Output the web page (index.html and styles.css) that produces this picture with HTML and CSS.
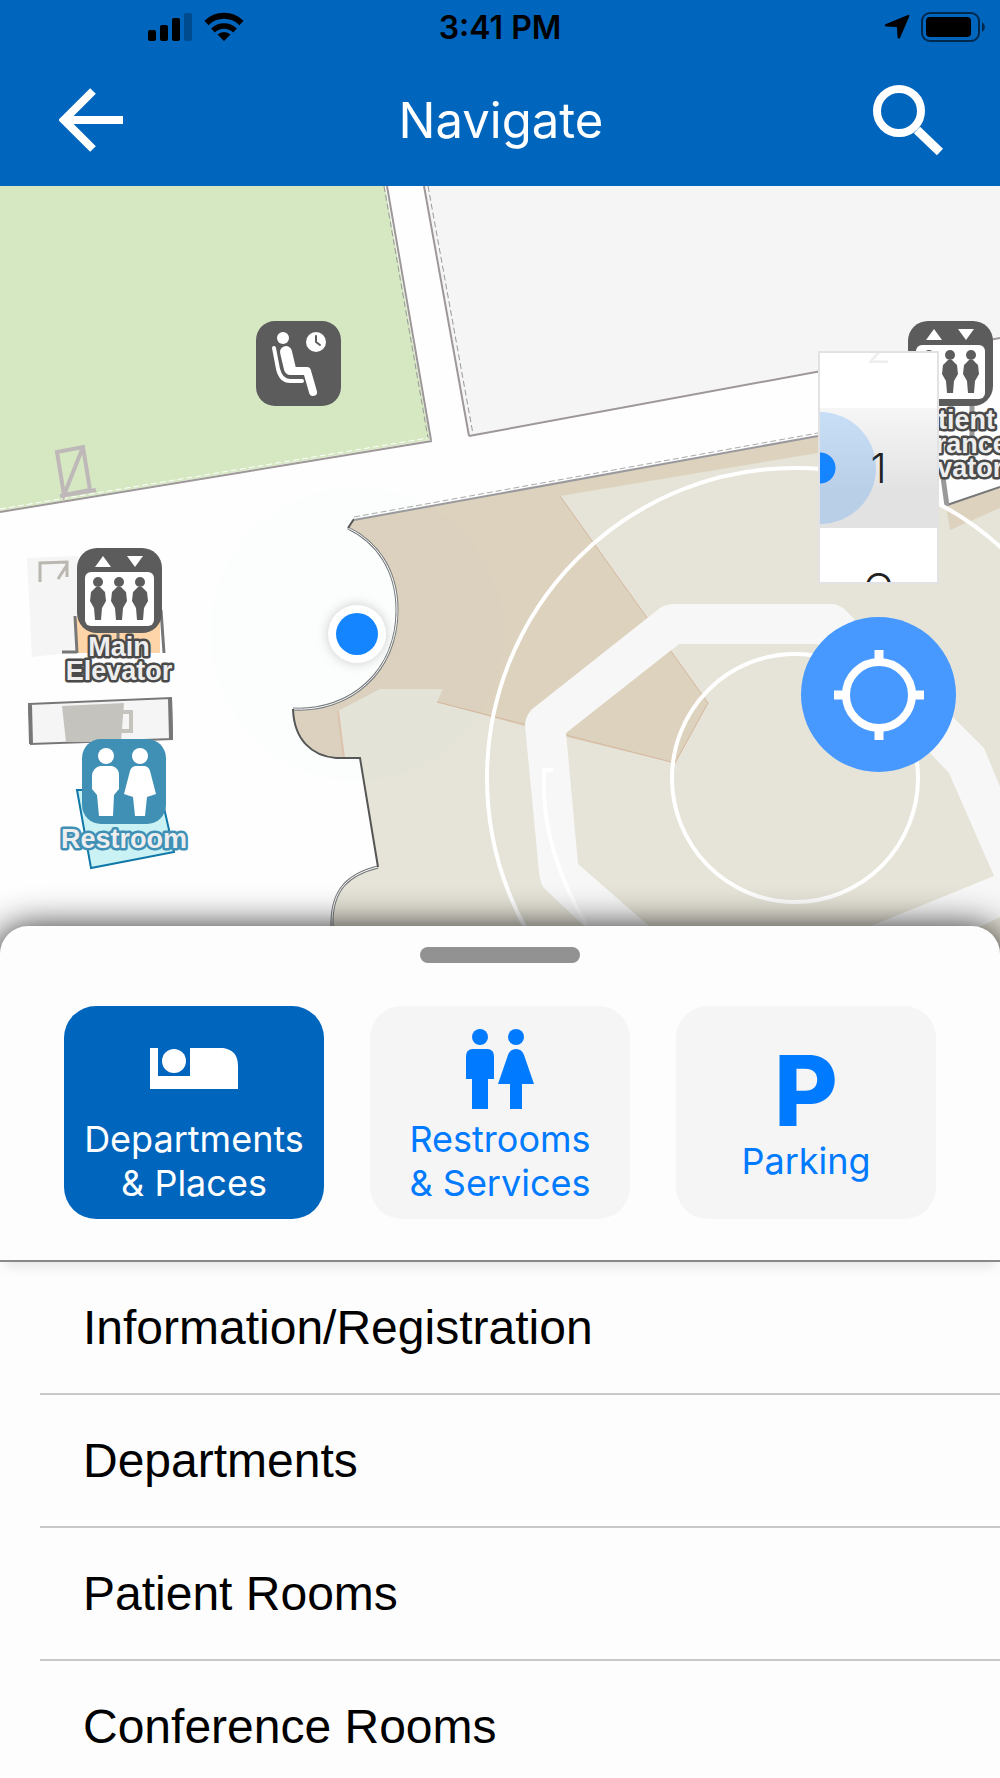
FILE: index.html
```
<!DOCTYPE html>
<html lang="en">
<head>
    <meta charset="UTF-8">
    <meta name="viewport" content="width=device-width, initial-scale=1.0">
    <title>Navigate</title>
    <link rel="stylesheet" href="styles.css">
</head>
<body>

    <header>
        <div class="status-bar">
            <div class="status-left">
                <svg width="44" height="28" viewBox="0 0 44 28">
                    <rect x="0" y="17" width="8" height="11" rx="2"/>
                    <rect x="12" y="12" width="8" height="16" rx="2"/>
                    <rect x="24" y="5" width="8" height="23" rx="2"/>
                    <rect x="36" y="0" width="8" height="28" rx="2" opacity="0.25"/>
                </svg>
                <svg width="40" height="30" viewBox="0 0 40 30">
                    <path d="M2.500 11 A25 25 0 0 1 37.500 11" fill="none" stroke="#000" stroke-width="6"/>
                    <path d="M9 18.500 A16 16 0 0 1 31 18.500" fill="none" stroke="#000" stroke-width="5.500"/>
                    <path d="M20 29 L13.500 22.500 A9.500 9.500 0 0 1 26.500 22.500 Z"/>
                </svg>
            </div>
            <span class="time">3:41 PM</span>
            <div class="status-right">
                <svg width="26" height="26" viewBox="0 0 26 26">
                    <path d="M24 1 Q26 0 25 3 L16 24 Q14 26 13.500 23 L13 14 Q13 13 12 13 L3 12.500 Q-1 12 2 10 Z"/>
                </svg>
                <svg width="64" height="30" viewBox="0 0 64 30">
                    <rect x="1" y="1" width="57" height="28" rx="8" fill="none" stroke="#000" stroke-opacity="0.6" stroke-width="2"/>
                    <rect x="5" y="5" width="45" height="20" rx="4"/>
                    <path d="M61 10 Q64 12 64 15 Q64 18 61 20 Z" opacity="0.6"/>
                </svg>
            </div>
        </div>
        <nav>
            <button type="button" class="nav-button" aria-label="Back">
                <svg width="64" height="64" viewBox="0 0 64 64" fill="none" stroke="#fff" stroke-width="8">
                    <path d="M64 32 H8 M34 3 L5 32 L34 61"/>
                </svg>
            </button>
            <h1>Navigate</h1>
            <button type="button" class="nav-button" aria-label="Search">
                <svg width="70" height="71" viewBox="0 0 70 71" fill="none" stroke="#fff">
                    <circle cx="26" cy="26" r="22" stroke-width="8"/>
                    <path d="M44 45 L67 67" stroke-width="9"/>
                </svg>
            </button>
        </nav>
    </header>

    <main>
        <section class="map">
            <svg class="map-canvas" viewBox="0 186 1000 780">
                <defs>
                    <symbol id="elevator" viewBox="0 0 85 85">
                        <rect width="85" height="85" rx="20" fill="#5c5c5c"/>
                        <rect x="8" y="24" width="69" height="54" rx="6" fill="#fff"/>
                        <path d="M18 19 L26 8 L34 19 Z M50 8 H66 L58 19 Z" fill="#fff"/>
                        <g id="rider" fill="#5c5c5c">
                            <circle cx="21" cy="34" r="5"/>
                            <path d="M19 39 H23 L28 44 L29 53 L25 60 L24 72 H18 L17 60 L13 53 L14 44 Z"/>
                        </g>
                        <use href="#rider" x="21"/>
                        <use href="#rider" x="42"/>
                    </symbol>
                </defs>

                <!-- streets and lots -->
                <rect y="186" width="1000" height="780" fill="#fefefe"/>
                <path d="M0 186 H385 L430 440 L0 511 Z" fill="#d6e8c2"/>
                <path d="M425 186 H1000 V338 L470 436 Z" fill="#f5f5f5"/>
                <g fill="none" stroke="#9d9798" stroke-width="2">
                    <path d="M0 512 L432 441 M469 436 L1000 338"/>
                    <path d="M387 186 L431 440 M424 186 L469 436"/>
                    <path d="M384 186 L428 438 M428 186 L473 434" stroke="#999" stroke-width="1" stroke-dasharray="6 3"/>
                    <path d="M0 509 L428 438" stroke="#fff" stroke-width="1" stroke-dasharray="6 3"/>
                </g>
                <path d="M57 452 L83 447 L90 490 L64 495 Z L64 495 L83 447 M60 496 L96 490" fill="none" stroke="#bfb8b8" stroke-width="4"/>

                <!-- building -->
                <path d="M352 520 L842 432 L900 500 L947 506 L1000 488 V966 H332 V926 C331 888 350 874 378 867 L360 758 H336 C312 756 294 740 293 709 C350 712 397 672 397 610 C397 570 377 542 348 528 Z" fill="#e6e4d8"/>
                <path d="M352 520 L818 436 V453 L560 496 L647 618 L708 703 L675 763 L566 737 L524 726 L437 702 L443 689 H380 L338 711 L344 758 H336 C312 756 294 740 293 709 C350 712 397 672 397 610 C397 570 377 542 348 528 Z" fill="#ddd2be"/>
                <path d="M560 496 L708 703 L675 763 L437 702" fill="none" stroke="#d5b69c" stroke-width="1"/>
                <path d="M338 711 L344 758" stroke="#dec3ae" stroke-width="2"/>
                <path d="M946 506 L1000 488 V508 L950 530 Z" fill="#ddd2be"/>
                <g fill="none" stroke="#fff">
                    <path d="M332 926 C331 888 350 874 378 867 M293 709 C350 712 397 672 397 610 C397 570 377 542 348 528" stroke="#777a7c" stroke-width="3"/>
                    <path d="M332 926 C331 888 350 874 378 867 M293 709 C350 712 397 672 397 610 C397 570 377 542 348 528" stroke-width="1"/>
                    <path d="M378 867 L360 758 H336 C312 756 294 740 293 709 M348 528 L354 519" stroke="#555" stroke-width="2"/>
                    <path d="M354 520 L818 436" stroke="#9a9a9e" stroke-width="2"/>
                    <path d="M354 517 L818 433" stroke="#aaa" stroke-width="1" stroke-dasharray="6 3"/>
                    <path d="M947 505 L1000 487" stroke="#777" stroke-width="2"/>
                    <path d="M942 470 L947 506" stroke="#999" stroke-width="5"/>
                    <path d="M972 400 V440" stroke="#999" stroke-width="5"/>
                </g>

                <!-- courtyard -->
                <path fill-rule="evenodd" fill="#f7f7f7" d="M674 604 H834 Q842 605 852 617 L984 748 L1000 787 V917 L900 966 H620 L584 926 L544 888 Q540 883 539 872 L525 725 Q525 718 531 710 L660 608 Q666 604 674 604 Z M679 644 L566 733 L578 864 L649 926 L690 966 H780 L871 926 L994 876 L949 773 L930 753 L817 644 Z"/>
                <g fill="none" stroke="#fff" stroke-width="4">
                    <ellipse cx="795" cy="778" rx="308" ry="310"/>
                    <ellipse cx="795" cy="778" rx="123" ry="124"/>
                    <path d="M553 770 H544 C541 830 560 880 587 926"/>
                </g>

                <!-- rooms on the left -->
                <path d="M27 558 L78 556 V652 L32 657 Z" fill="#f5f5f5"/>
                <path d="M40 582 V563 L67 562 V577 M67 565 L58 579" fill="none" stroke="#bab6b0" stroke-width="3"/>
                <rect x="76" y="618" width="84" height="35" fill="#fdd5a8"/>
                <path d="M75 616 L77 653 M161 610 L164 653 M62 652 H77 M118 618 V653" fill="none" stroke="#777" stroke-width="3"/>
                <path d="M29 704 L171 698 L172 739 L31 744 Z" fill="#f5f5f5" stroke="#777" stroke-width="2"/>
                <path d="M30 705 L31 744 M170 698 L171 740" stroke="#777" stroke-width="4"/>
                <path d="M62 706 L124 703 L121 742 H66 Z" fill="#c5c3bd"/>
                <path d="M121 712 H131 V731 H121" fill="none" stroke="#c5c3bd" stroke-width="4"/>
                <path d="M77 790 H160 L174 852 L91 868 Z" fill="#caf1f3" stroke="#0f78a8" stroke-width="2"/>

                <!-- waiting area -->
                <g transform="translate(256 321)" fill="none" stroke="#fff" stroke-linecap="round" stroke-linejoin="round">
                    <rect width="85" height="85" rx="19" fill="#5c5c5c" stroke="none"/>
                    <circle cx="27" cy="17" r="6" fill="#fff" stroke="none"/>
                    <circle cx="60" cy="21" r="10" fill="#fff" stroke="none"/>
                    <path d="M60 15 V21 L64 24" stroke="#5c5c5c" stroke-width="2"/>
                    <path d="M18 27 L22 48 Q25 60 34 60 H46" stroke-width="4"/>
                    <path d="M30 31 L34 48" stroke-width="12"/>
                    <path d="M36 50 H51 L57 71" stroke-width="8"/>
                </g>

                <!-- elevators -->
                <use href="#elevator" x="77" y="548" width="85" height="85"/>
                <use href="#elevator" x="908" y="321" width="85" height="85"/>
                <g class="place-label">
                    <text x="119" y="656">Main</text>
                    <text x="119" y="680">Elevator</text>
                    <text x="950" y="429">Patient</text>
                    <text x="950" y="453">Entrance</text>
                    <text x="950" y="477">Elevator</text>
                </g>

                <!-- restroom -->
                <g transform="translate(82 739)" fill="#fff">
                    <rect width="84" height="85" rx="19" fill="#4090b6"/>
                    <circle cx="24" cy="17" r="8"/>
                    <path d="M18 27 H30 Q37 29 37 36 V50 L32 56 L31 77 H17 L15 56 L10 50 V36 Q11 29 18 27 Z"/>
                    <circle cx="58" cy="17" r="8"/>
                    <path d="M53 27 H63 Q67 28 68 32 L74 55 L65 58 L63 77 H53 L51 58 L42 55 L48 32 Q49 28 53 27 Z"/>
                </g>
                <g class="place-label blue">
                    <text x="124" y="848">Restroom</text>
                </g>

                <!-- you are here -->
                <circle cx="357" cy="634" r="147" fill="#8fd0d8" opacity="0.02"/>
                <circle class="here" cx="357" cy="634" r="29" fill="#fff"/>
                <circle cx="357" cy="634" r="21" fill="#1484ff"/>
            </svg>

            <div class="map-controls">
                <div class="floor-picker">
                    <button type="button" class="floor far">2</button>
                    <button type="button" class="floor selected">1</button>
                    <button type="button" class="floor">G</button>
                </div>
                <button type="button" class="locate" aria-label="Show my location">
                    <svg width="92" height="92" viewBox="0 0 92 92" fill="none" stroke="#fff">
                        <circle cx="46" cy="46" r="33" stroke-width="8"/>
                        <path d="M46 1 V12 M46 80 V91 M1 46 H12 M80 46 H91" stroke-width="9"/>
                    </svg>
                </button>
            </div>
        </section>

        <section class="sheet">
            <div class="handle"></div>
            <div class="tiles">
                <button type="button" class="tile active">
                    <svg width="88" height="80" viewBox="0 0 88 80" fill="currentColor">
                        <path d="M0 19 H8 V47 H40 V19 H73 Q88 21 88 37 V60 H0 Z"/>
                        <circle cx="24" cy="32" r="12"/>
                    </svg>
                    <span>Departments<br>&amp; Places</span>
                </button>
                <button type="button" class="tile">
                    <svg width="68" height="80" viewBox="0 0 68 80" fill="currentColor">
                        <circle cx="14" cy="8" r="8"/>
                        <path d="M6 20 H22 Q28 21 28 27 V50 H22 V80 H6 V50 H0 V27 Q0 21 6 20 Z"/>
                        <circle cx="50" cy="8" r="8"/>
                        <path d="M50 20 Q56 20 58 26 L68 55 H56 V80 H44 V55 H32 L42 26 Q44 20 50 20 Z"/>
                    </svg>
                    <span>Restrooms<br>&amp; Services</span>
                </button>
                <button type="button" class="tile">
                    <b class="parking-icon" aria-hidden="true">P</b>
                    <span>Parking</span>
                </button>
            </div>
            <ul class="places">
                <li><a href="#">Information/Registration</a></li>
                <li><a href="#">Departments</a></li>
                <li><a href="#">Patient Rooms</a></li>
                <li><a href="#">Conference Rooms</a></li>
            </ul>
        </section>
    </main>

</body>
</html>
```

FILE: styles.css
```
* {
    margin: 0;
    padding: 0;
    box-sizing: border-box;
}
body {
    height: 100vh;
    overflow: hidden;
    background-color: #fdfdfd;
    font-family: Inter, sans-serif;
}
button {
    border: none;
    background: none;
    font-family: inherit;
    cursor: pointer;
}
svg {
    display: block;
}

/* top bar */
header {
    background-color: #0065bd;
    color: white;
}
.status-bar {
    display: grid;
    grid-template-columns: 1fr auto 1fr;
    align-items: center;
    height: 54px;
}
.status-left {
    display: flex;
    align-items: center;
    gap: 12px;
    padding-left: 148px;
}
.status-right {
    display: flex;
    align-items: center;
    justify-content: flex-end;
    gap: 11px;
    padding-right: 15px;
}
.time {
    color: black;
    font-size: 32px;
    font-weight: 600;
}
nav {
    display: flex;
    align-items: center;
    justify-content: space-between;
    height: 132px;
    padding: 0 57px 0 59px;
}
.nav-button {
    width: 70px;
}
h1 {
    font-size: 49px;
    font-weight: 400;
}

/* map */
.map {
    position: relative;
    overflow: hidden;
}
.map-canvas {
    width: 100%;
}
.place-label {
    font-family: "Liberation Sans", sans-serif;
    font-size: 27px;
    font-weight: bold;
    text-anchor: middle;
    fill: #eeeeee;
    stroke: #4a4a4a;
    stroke-width: 5px;
    stroke-linejoin: round;
    paint-order: stroke;
}
.place-label.blue {
    stroke: #4090b6;
}
.here {
    filter: drop-shadow(0 0 6px rgba(0, 0, 0, 0.2));
}
.map-controls {
    position: absolute;
    top: 165px;
    right: 44px;
    display: flex;
    flex-direction: column;
    align-items: center;
    gap: 33px;
}
.floor-picker {
    display: flex;
    flex-direction: column;
    justify-content: center;
    width: 121px;
    height: 233px;
    overflow: hidden;
    border: 2px solid #e2e2e4;
    background-color: white;
}
.floor {
    position: relative;
    flex: none;
    height: 120px;
    font-size: 41px;
    font-weight: 300;
    color: #222222;
}
.floor.far {
    color: #eeeeee;
}
.floor.selected {
    overflow: hidden;
    background-image: linear-gradient(#f6f6f6, #e2e2e2 70%);
}
.floor.selected::before {
    content: "";
    position: absolute;
    left: -56px;
    top: 4px;
    width: 112px;
    height: 112px;
    border-radius: 50%;
    background-image: radial-gradient(#1484ff 15px, rgba(20, 132, 255, 0.2) 16px);
}
.locate {
    display: flex;
    align-items: center;
    justify-content: center;
    width: 155px;
    height: 155px;
    border-radius: 50%;
    background-color: #4799ff;
}

/* bottom sheet */
.sheet {
    position: relative;
    margin-top: -40px;
    padding-top: 21px;
    border-radius: 28px 28px 0 0;
    background-color: #fdfdfd;
    box-shadow: 0 6px 36px 4px rgba(0, 0, 0, 0.9);
}
.handle {
    width: 160px;
    height: 16px;
    margin: 0 auto 43px;
    border-radius: 8px;
    background-color: #929292;
}
.tiles {
    display: grid;
    grid-template-columns: repeat(3, 1fr);
    gap: 46px;
    padding: 0 64px 41px;
    border-bottom: 2px solid #888888;
    box-shadow: 0 8px 12px -4px rgba(0, 0, 0, 0.1);
}
.tile {
    display: flex;
    flex-direction: column;
    align-items: center;
    justify-content: center;
    gap: 8px;
    height: 213px;
    padding-top: 8px;
    border-radius: 32px;
    background-color: #f5f5f5;
    color: #007aff;
    font-size: 36px;
    line-height: 44px;
}
.tile.active {
    background-color: #0065bd;
    color: white;
}
.parking-icon {
    font-size: 98px;
    font-weight: 800;
    line-height: 80px;
}
.places {
    list-style-type: none;
    padding-left: 40px;
}
.places li {
    border-bottom: 2px solid #c8c8c8;
}
.places a {
    display: block;
    padding-left: 43px;
    font-family: "Liberation Sans", sans-serif;
    font-size: 48px;
    line-height: 131px;
    color: black;
    text-decoration: none;
}
```
